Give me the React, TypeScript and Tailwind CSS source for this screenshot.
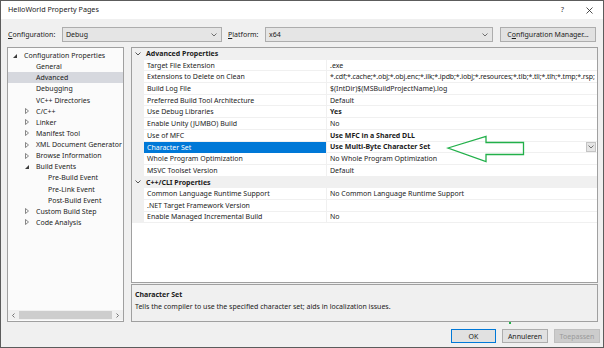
import React from 'react';

type TreeItem = { label: string; level: number; icon?: 'open' | 'closed'; selected?: boolean };

const treeItems: TreeItem[] = [
  { label: 'Configuration Properties', level: 0, icon: 'open' },
  { label: 'General', level: 1 },
  { label: 'Advanced', level: 1, selected: true },
  { label: 'Debugging', level: 1 },
  { label: 'VC++ Directories', level: 1 },
  { label: 'C/C++', level: 1, icon: 'closed' },
  { label: 'Linker', level: 1, icon: 'closed' },
  { label: 'Manifest Tool', level: 1, icon: 'closed' },
  { label: 'XML Document Generator', level: 1, icon: 'closed' },
  { label: 'Browse Information', level: 1, icon: 'closed' },
  { label: 'Build Events', level: 1, icon: 'open' },
  { label: 'Pre-Build Event', level: 2 },
  { label: 'Pre-Link Event', level: 2 },
  { label: 'Post-Build Event', level: 2 },
  { label: 'Custom Build Step', level: 1, icon: 'closed' },
  { label: 'Code Analysis', level: 1, icon: 'closed' },
];

type Row =
  | { kind: 'header'; label: string }
  | { kind: 'prop'; name: string; value: string; bold?: boolean; selected?: boolean; tight?: boolean };

const rows: Row[] = [
  { kind: 'header', label: 'Advanced Properties' },
  { kind: 'prop', name: 'Target File Extension', value: '.exe' },
  {
    kind: 'prop',
    name: 'Extensions to Delete on Clean',
    value: '*.cdf;*.cache;*.obj;*.obj.enc;*.ilk;*.ipdb;*.iobj;*.resources;*.tlb;*.tli;*.tlh;*.tmp;*.rsp;',
    tight: true,
  },
  { kind: 'prop', name: 'Build Log File', value: '$(IntDir)$(MSBuildProjectName).log' },
  { kind: 'prop', name: 'Preferred Build Tool Architecture', value: 'Default' },
  { kind: 'prop', name: 'Use Debug Libraries', value: 'Yes', bold: true },
  { kind: 'prop', name: 'Enable Unity (JUMBO) Build', value: 'No' },
  { kind: 'prop', name: 'Use of MFC', value: 'Use MFC in a Shared DLL', bold: true },
  { kind: 'prop', name: 'Character Set', value: 'Use Multi-Byte Character Set', bold: true, selected: true },
  { kind: 'prop', name: 'Whole Program Optimization', value: 'No Whole Program Optimization' },
  { kind: 'prop', name: 'MSVC Toolset Version', value: 'Default' },
  { kind: 'header', label: 'C++/CLI Properties' },
  { kind: 'prop', name: 'Common Language Runtime Support', value: 'No Common Language Runtime Support' },
  { kind: 'prop', name: '.NET Target Framework Version', value: '' },
  { kind: 'prop', name: 'Enable Managed Incremental Build', value: 'No' },
];

function Chevron({ className = '' }: { className?: string }) {
  return (
    <svg width="6" height="4" viewBox="0 0 6 4" className={className}>
      <path d="M0.5 0.5 L3 3 L5.5 0.5" fill="none" stroke="currentColor" strokeWidth="0.9" />
    </svg>
  );
}

function TreeGlyph({ type }: { type: 'open' | 'closed' }) {
  if (type === 'open') {
    return (
      <svg width="4" height="4" viewBox="0 0 4 4">
        <path d="M4 0 L4 4 L0 4 Z" fill="#3c3c3c" />
      </svg>
    );
  }
  return (
    <svg width="4" height="6" viewBox="0 0 4 6">
      <path d="M0.5 0.5 L3.5 3 L0.5 5.5 Z" fill="none" stroke="#6a6a6a" strokeWidth="0.8" />
    </svg>
  );
}

function Combo({ text, width }: { text: string; width: string }) {
  return (
    <div className={`${width} h-[15px] bg-[#e5e5e5] border border-[#adadad] flex items-center justify-between pl-[3px] pr-[4px]`}>
      <span>{text}</span>
      <Chevron className="text-[#606060]" />
    </div>
  );
}

export default function App() {
  return (
    <div className="w-[604px] h-[348px] border border-[#5c5c5c] bg-[#f0f0f0] flex flex-col text-[7px] text-[#1b1b1b] font-['Noto_Sans',sans-serif] leading-none overflow-hidden relative">
      {/* Title bar */}
      <div className="h-[18px] bg-white flex items-center justify-between pl-[7px] pr-[10px] shrink-0">
        <span className="text-[7.2px]">HelloWorld Property Pages</span>
        <div className="flex items-center gap-[22px] text-[#333]">
          <span className="text-[7.5px]">?</span>
          <svg width="7" height="7" viewBox="0 0 7 7">
            <path d="M0.5 0.5 L6.5 6.5 M6.5 0.5 L0.5 6.5" stroke="#222" strokeWidth="0.8" />
          </svg>
        </div>
      </div>

      {/* Configuration row */}
      <div className="flex items-center mt-[8px] pl-[7px] h-[15px] shrink-0">
        <span className="w-[54px]"><span className="underline">C</span>onfiguration:</span>
        <Combo text="Debug" width="w-[160px]" />
        <span className="ml-[6px] w-[37px]"><span className="underline">P</span>latform:</span>
        <Combo text="x64" width="w-[228px]" />
        <div className="ml-[7px] w-[96px] h-[15px] bg-[#e1e1e1] border border-[#adadad] flex items-center justify-center">
          C<span className="underline">o</span>nfiguration Manager...
        </div>
      </div>

      {/* Main area */}
      <div className="flex mt-[5px] pl-[6px] pr-[5px] h-[275px] shrink-0">
        {/* Tree */}
        <div className="w-[117px] border border-[#a0a0a0] bg-[#fbfbfb] flex flex-col">
          <div className="flex-1 pt-[2px]">
            {treeItems.map((item) => (
              <div
                key={item.label}
                className={`h-[11.13px] flex items-center ${item.selected ? 'bg-[#d6d8de]' : ''}`}
              >
                <div
                  className="flex items-center justify-end shrink-0"
                  style={{ width: 9 + item.level * 12 }}
                >
                  {item.icon && <TreeGlyph type={item.icon} />}
                </div>
                <span className="ml-[7px] whitespace-nowrap">{item.label}</span>
              </div>
            ))}
          </div>
          {/* horizontal scrollbar */}
          <div className="h-[10px] mb-[1px] flex items-center bg-[#f0f0f0] text-[#606060]">
            <div className="w-[11px] flex justify-center">
              <svg width="3" height="5" viewBox="0 0 3 5"><path d="M2.5 0.5 L0.5 2.5 L2.5 4.5" fill="none" stroke="#555" strokeWidth="0.8" /></svg>
            </div>
            <div className="flex-1 h-[8px] bg-[#cdcdcd]" />
            <div className="w-[11px] flex justify-center">
              <svg width="3" height="5" viewBox="0 0 3 5"><path d="M0.5 0.5 L2.5 2.5 L0.5 4.5" fill="none" stroke="#555" strokeWidth="0.8" /></svg>
            </div>
          </div>
        </div>

        {/* Right column */}
        <div className="flex-1 ml-[7px] flex flex-col">
          {/* Property grid */}
          <div className="h-[236px] border border-[#a0a0a0] bg-white flex flex-col overflow-hidden">
            {rows.map((row, i) =>
              row.kind === 'header' ? (
                <div key={i} className="h-[11.7px] flex items-center bg-[#f0f0f0] shrink-0">
                  <div className="w-[12px] flex justify-center">
                    <Chevron className="text-[#444]" />
                  </div>
                  <span className="ml-[2px] font-bold">{row.label}</span>
                </div>
              ) : (
                <div key={i} className="h-[11.7px] flex shrink-0">
                  <div className="w-[12px] bg-[#f0f0f0]" />
                  <div
                    className={`w-[183px] flex items-center pl-[3px] border-r border-[#f0f0f0] ${
                      row.selected ? 'bg-[#0078d7] text-white' : 'border-b'
                    }`}
                  >
                    {row.name}
                  </div>
                  <div className="flex-1 flex items-center justify-between pl-[3px] border-b border-[#f0f0f0] min-w-0">
                    <span
                      className={`whitespace-nowrap ${row.bold ? 'font-bold' : ''} ${
                        row.tight ? 'tracking-[-0.12px]' : ''
                      }`}
                    >
                      {row.value}
                    </span>
                    {row.selected && (
                      <div className="w-[10px] h-[10px] mr-[1px] bg-[#e5e5e5] border border-[#c4c4c4] flex items-center justify-center shrink-0">
                        <Chevron className="text-[#666]" />
                      </div>
                    )}
                  </div>
                </div>
              )
            )}
          </div>

          {/* Description */}
          <div className="mt-[1px] h-[38px] border border-[#a0a0a0] bg-[#f0f0f0] px-[3px] pt-[6px] flex flex-col gap-[5px]">
            <span className="font-bold">Character Set</span>
            <span>Tells the compiler to use the specified character set; aids in localization issues.</span>
          </div>
        </div>
      </div>

      {/* Buttons */}
      <div className="flex justify-end gap-[6px] mt-[7px] pr-[3px] shrink-0">
        <div className="w-[45px] h-[14px] bg-[#e1e1e1] border border-[#0078d7] flex items-center justify-center">OK</div>
        <div className="w-[46px] h-[14px] bg-[#e1e1e1] border border-[#adadad] flex items-center justify-center">Annuleren</div>
        <div className="w-[46px] h-[14px] bg-[#cccccc] border border-[#bfbfbf] text-[#9a9a9a] flex items-center justify-center">Toepassen</div>
      </div>

      {/* green annotation arrow */}
      <svg className="absolute left-[445px] top-[134px]" width="80" height="28" viewBox="0 0 80 28">
        <path
          d="M2 13 L40 1.5 L40 7.5 L77.5 7.5 L77.5 19.5 L40 19.5 L40 26.5 Z"
          fill="none"
          stroke="#22b04a"
          strokeWidth="1.3"
          strokeLinejoin="miter"
        />
      </svg>
      <div className="absolute left-[508px] top-[321px] w-[2px] h-[2px] bg-[#22b04a]" />
    </div>
  );
}
